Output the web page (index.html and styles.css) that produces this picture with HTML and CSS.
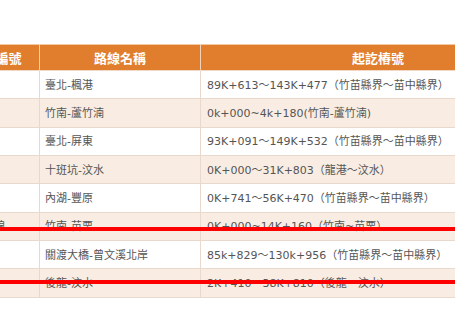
FILE: index.html
```html
<!DOCTYPE html>
<html lang="zh-Hant">
<head>
<meta charset="utf-8">
<link rel="stylesheet" href="styles.css">
</head>
<body>
<div class="page">
  <table class="routes">
    <colgroup>
      <col class="c-id">
      <col class="c-name">
      <col class="c-range">
    </colgroup>
    <thead>
      <tr><th>路線編號</th><th>路線名稱</th><th>起訖樁號</th></tr>
    </thead>
    <tbody>
      <tr><td>台1線</td><td>臺北-楓港</td><td>89K+613～143K+477（竹苗縣界～苗中縣界）</td></tr>
      <tr><td>台1線</td><td>竹南-蘆竹湳</td><td>0k+000~4k+180(竹南-蘆竹湳)</td></tr>
      <tr><td>台3線</td><td>臺北-屏東</td><td>93K+091～149K+532（竹苗縣界～苗中縣界）</td></tr>
      <tr><td>台6線</td><td>十班坑-汶水</td><td>0K+000～31K+803（龍港～汶水）</td></tr>
      <tr><td>台3線</td><td>內湖-豐原</td><td>0K+741～56K+470（竹苗縣界～苗中縣界）</td></tr>
      <tr><td>台13甲線</td><td>竹南-苗栗</td><td>0K+000~14K+160（竹南~苗栗）</td></tr>
      <tr><td>台3線</td><td>關渡大橋-曾文溪北岸</td><td>85k+829～130k+956（竹苗縣界～苗中縣界）</td></tr>
      <tr><td>台6線</td><td>後龍-汶水</td><td>2K+410～38K+810（後龍～汶水）</td></tr>
    </tbody>
  </table>
  <div class="strike strike-a"></div>
  <div class="strike strike-b"></div>
</div>
</body>
</html>
```

FILE: styles.css
```css
html, body {
  margin: 0;
  padding: 0;
  background: #ffffff;
  overflow: hidden;
}
.page {
  position: relative;
  width: 455px;
  height: 310px;
  padding-top: 44px;
  box-sizing: border-box;
  overflow: hidden;
}
.routes {
  margin-left: -49px;
  width: 604px;
  table-layout: fixed;
  border-collapse: collapse;
  font-family: "DejaVu Sans", "Noto Sans CJK TC", sans-serif;
  font-size: 11px;
  color: #555555;
  border-bottom: 1px solid #eeb88a;
}
.c-id { width: 88px; }
.c-name { width: 161px; }
.c-range { width: 355px; }
.routes th {
  background: #e07e2e;
  color: #ffffff;
  font-family: "Noto Sans CJK TC", sans-serif;
  font-weight: bold;
  font-size: 13px;
  height: 26px;
  padding: 0;
  box-sizing: border-box;
  text-align: center;
  border-left: 1px solid #f2d2b6;
  border-right: 1px solid #f2d2b6;
  border-top: 1px solid #f3c8a2;
  border-bottom: 1px solid #f0d8c4;
  line-height: 24px;
}
.routes td {
  height: 28.33px;
  box-sizing: border-box;
  padding: 2px 5px 0 6px;
  border: 1px solid #e9d9cc;
  text-align: left;
  white-space: nowrap;
  overflow: hidden;
  line-height: 14px;
}
.routes td:nth-child(2) { padding-left: 5px; }
.routes tbody tr:nth-child(odd) td { background: #ffffff; }
.routes tbody tr:nth-child(even) td { background: #f9ede3; }
.strike {
  position: absolute;
  left: 0;
  width: 100%;
  height: 4px;
  background: #ff0000;
}
.strike-a { top: 227px; }
.strike-b { top: 280px; }
```
